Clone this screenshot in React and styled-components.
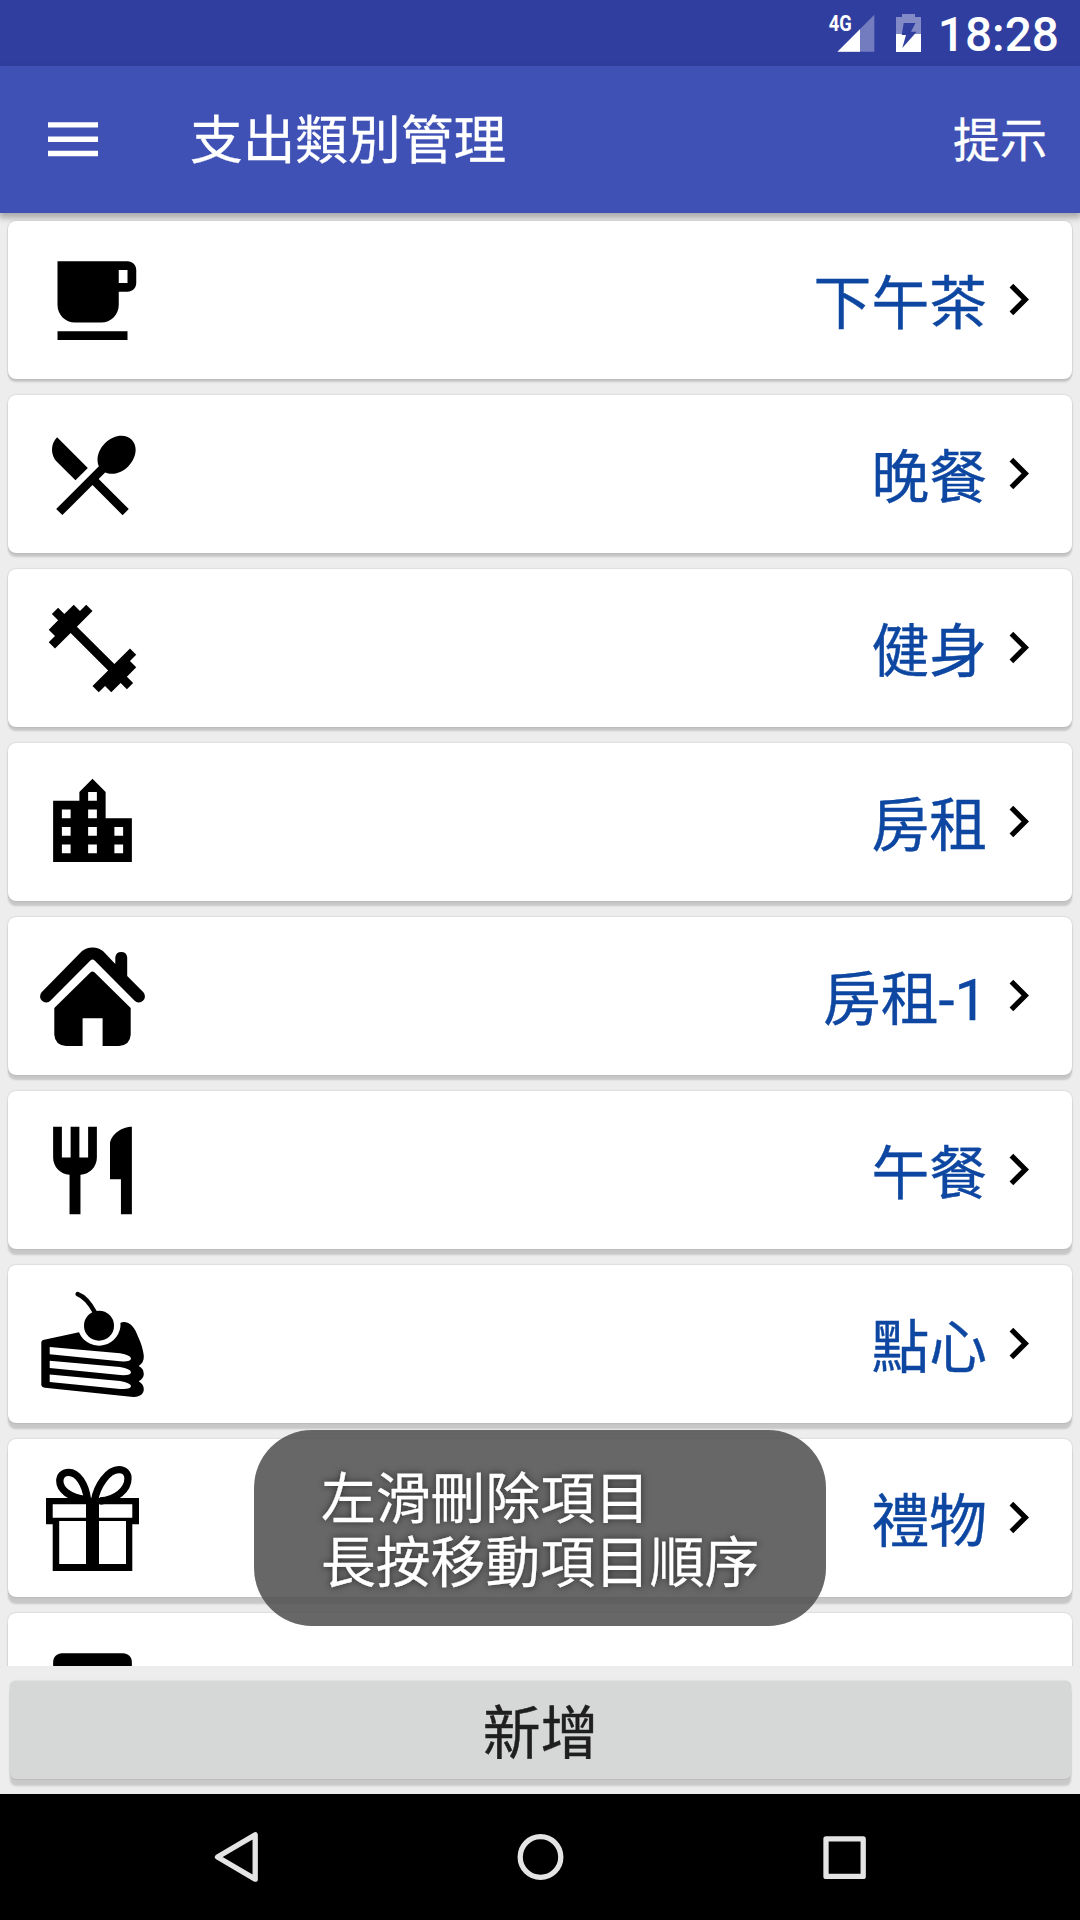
import React from "react";
import styled, { createGlobalStyle } from "styled-components";

const GlobalStyle = createGlobalStyle`
  * { box-sizing: border-box; }
  html, body { margin: 0; padding: 0; background: #000; }
  body { font-family: Roboto, "Noto Sans CJK TC", sans-serif; }
`;

const Screen = styled.div`
  position: relative;
  width: 1080px;
  height: 1920px;
  display: flex;
  flex-direction: column;
  overflow: hidden;
  background: #ededed;
`;

const StatusBar = styled.div`
  flex: none;
  height: 66px;
  display: flex;
  align-items: center;
  justify-content: flex-end;
  padding-right: 21px;
  background: #303f9f;
  color: #fff;
`;

const StatusIcons = styled.svg`
  width: 104px;
  height: 66px;
  margin-right: 9px;
`;

const Clock = styled.span`
  font-size: 47.8px;
  font-weight: 500;
  line-height: 66px;
  padding-top: 3px;
`;

const AppBar = styled.header`
  flex: none;
  height: 147px;
  display: flex;
  align-items: center;
  padding: 0 33px 0 37px;
  background: #3f51b5;
  color: #fff;
  box-shadow: 0 4px 6px 1px rgba(0, 0, 0, 0.28);
`;

const MenuIcon = styled.svg`
  width: 72px;
  height: 72px;
`;

const Title = styled.h1`
  flex: 1;
  margin: 0 0 0 81px;
  padding-top: 2px;
  font-size: 52.7px;
  font-weight: 400;
  line-height: 72px;
  -webkit-text-stroke: 0.3px currentColor;
`;

const Action = styled.span`
  padding-top: 2px;
  font-size: 47px;
  line-height: 66px;
  -webkit-text-stroke: 0.3px currentColor;
`;

const List = styled.main`
  flex: none;
  height: 1453px;
  padding: 8px 8px 0;
  display: flex;
  flex-direction: column;
  gap: 16px;
  overflow: hidden;
`;

const Card = styled.div`
  flex: none;
  height: 158px;
  display: flex;
  align-items: center;
  padding: 0 22px 0 32px;
  border-radius: 8px;
  background: #fff;
  box-shadow: 0 ${(p) => p.$depth}px 2px rgba(0, 0, 0, 0.16),
    0 0 2px rgba(0, 0, 0, 0.2);
`;

const Glyph = styled.svg`
  width: 105px;
  height: 105px;
  overflow: visible;
`;

const Label = styled.span`
  flex: 1;
  padding-top: 8px;
  text-align: right;
  font-size: 57.8px;
  line-height: 80px;
  color: #0d47a1;
  -webkit-text-stroke: 0.4px currentColor;
`;

const Chevron = styled.svg`
  width: 63px;
  height: 63px;
  margin-bottom: 1px;
`;

const Footer = styled.div`
  flex: none;
  height: 128px;
  padding: 15px 9px 15px 10px;
`;

const AddButton = styled.button`
  display: block;
  width: 100%;
  height: 98px;
  border: 0;
  padding: 8px 0 0;
  border-radius: 6px;
  background: #d6d7d7;
  color: #1f1f1f;
  font-family: inherit;
  font-size: 57.8px;
  line-height: 90px;
  -webkit-text-stroke: 0.4px currentColor;
  box-shadow: 0 7px 2px rgba(0, 0, 0, 0.15), 0 0 2px rgba(0, 0, 0, 0.2);
`;

const NavBar = styled.nav`
  flex: none;
  height: 126px;
  display: grid;
  grid-template-columns: repeat(3, 304px);
  justify-content: center;
  align-items: center;
  justify-items: center;
  background: #000;
`;

const NavIcon = styled.svg`
  width: 60px;
  height: 60px;
  fill: none;
  stroke: #e4e4e4;
  stroke-width: 5.3;
  stroke-linejoin: round;
`;

const Toast = styled.div`
  position: absolute;
  left: 254px;
  top: 1430px;
  width: 572px;
  height: 196px;
  padding: 37px 67px 31px;
  border-radius: 58px;
  background: rgba(80, 80, 80, 0.87);
  color: #fff;
  font-size: 54.8px;
  line-height: 64px;
  white-space: pre;
  -webkit-text-stroke: 0.3px currentColor;
  text-shadow: 0 0 7px rgba(0, 0, 0, 0.65);
`;

const material = (d) => (
  <Glyph viewBox="0 0 24 24">
    <path d={d} />
  </Glyph>
);

const house = (
  <Glyph viewBox="0 0.3 105 105">
    <path d="M1.6 48.6L41.8 7.6Q46 3.8 52.5 3.8T63.2 7.6L75.3 20.2V13.5A6 6 0 0 1 87.2 13.5V32.4L103.4 48.6A6 6 0 0 1 94.4 56.7L54.6 16.8Q52.5 15 50.4 16.8L10.6 56.7A6 6 0 0 1 1.6 48.6Z" />
    <path d="M50.6 28.6Q52.5 26.8 54.4 28.6L90.7 64.2V91Q90 101.5 79 102.2H62.6V74.5H42.6V102.2H26Q15 101.5 14.3 91V64.2Z" />
  </Glyph>
);

const cake = (
  <Glyph viewBox="0 0.5 105 105">
    <path d="M37.7 2.6Q47 6 55 21" fill="none" stroke="#000" strokeWidth="4.6" strokeLinecap="round" />
    <circle cx="59" cy="34.2" r="15" />
    <path
      fillRule="evenodd"
      d="M39 40.8L3 48.6Q1.3 49.2 1.3 51V93.8Q1.8 96 5 96.3L93.3 105.5C100 105.8 103.8 102 103.8 97.8Q103.8 93 98.7 89.8Q103.8 87 103.8 82.5Q103.8 77 98.7 74.5Q104.2 71 103.8 64C103 58 101 51 98.3 45.8C95 36 90 30.3 83.3 30.5L80.5 31.2A21.6 21.6 0 0 1 39 40.8Z
      M9.7 55.5V62.8L80 69.8Q91 70.5 91 67Q90.5 63.5 80 61.8Z
      M9.7 69.3V76.6L80 83.6Q91 84.3 91 80.8Q90.5 77.3 80 75.6Z
      M9.7 83.1V90.4L80 97.4Q91 98.1 91 94.6Q90.5 91.1 80 89.4Z"
    />
  </Glyph>
);

const gift = (
  <Glyph viewBox="0 0.5 105 105">
    <path
      fillRule="evenodd"
      d="M6 32.5H99V58.8H92.3V105.5H12.7V58.8H6Z M12.7 38.8V52.3H46V38.8Z M59 38.8V52.3H92.3V38.8Z M19.2 55.6V98.6H46V55.6Z M59 55.6V98.6H86V55.6Z"
    />
    <g fill="none" stroke="#000" strokeWidth="7.3">
      <path d="M47.5 34C45.5 19 38 6.8 28.7 6.8C22.5 6.8 19.8 11 19.8 15.6C19.8 24 29 32 46 34" />
      <path d="M54.5 35C57 20 68 4.1 79 4.1C84.5 4.1 88 8 88 13C88 24 76 34.5 60 35.5" />
    </g>
  </Glyph>
);

const rows = [
  {
    name: "下午茶",
    depth: 2.8,
    icon: material(
      "M20 3H4v10c0 2.21 1.79 4 4 4h6c2.21 0 4-1.79 4-4v-3h2c1.11 0 2-.89 2-2V5c0-1.11-.89-2-2-2zm0 5h-2V5h2v3zM4 19h16v2H4z"
    ),
  },
  {
    name: "晚餐",
    depth: 3.3,
    icon: material(
      "M8.1 13.34l2.83-2.83L3.91 3.5c-1.56 1.56-1.56 4.09 0 5.66l4.19 4.18zm6.78-1.81c1.53.71 3.68.21 5.27-1.38 1.91-1.91 2.28-4.65.81-6.12-1.46-1.46-4.2-1.1-6.12.81-1.59 1.59-2.09 3.74-1.38 5.27L3.7 19.87l1.41 1.41L12 14.41l6.88 6.88 1.41-1.41L13.41 13l1.47-1.47z"
    ),
  },
  {
    name: "健身",
    depth: 3.8,
    icon: material(
      "M20.57 14.86L22 13.43 20.57 12 17 15.57 8.43 7 12 3.43 10.57 2 9.14 3.43 7.71 2 5.57 4.14 4.14 2.71 2.71 4.14l1.43 1.43L2 7.71l1.43 1.43L2 10.57 3.43 12 7 8.43 15.57 17 12 20.57 13.43 22l1.43-1.43L16.29 22l2.14-2.14 1.43 1.43 1.43-1.43-1.43-1.43L22 16.29z"
    ),
  },
  {
    name: "房租",
    depth: 4.3,
    icon: material(
      "M15 11V5l-3-3-3 3v2H3v14h18V11h-6zm-8 8H5v-2h2v2zm0-4H5v-2h2v2zm0-4H5V9h2v2zm6 8h-2v-2h2v2zm0-4h-2v-2h2v2zm0-4h-2V9h2v2zm0-4h-2V5h2v2zm6 12h-2v-2h2v2zm0-4h-2v-2h2v2z"
    ),
  },
  { name: "房租-1", depth: 4.8, icon: house },
  {
    name: "午餐",
    depth: 5.3,
    icon: material(
      "M11 9H9V2H7v7H5V2H3v7c0 2.12 1.66 3.84 3.75 3.97V22h2.5v-9.03C11.34 12.84 13 11.12 13 9V2h-2v7zm5-3v8h2.5v8H21V2c-2.76 0-5 2.24-5 4z"
    ),
  },
  { name: "點心", depth: 5.8, icon: cake },
  { name: "禮物", depth: 6.2, icon: gift },
  {
    name: "",
    depth: 6.2,
    icon: material("M19 3H5c-1.1 0-2 .9-2 2v14c0 1.1.9 2 2 2h14c1.1 0 2-.9 2-2V5c0-1.1-.9-2-2-2z"),
  },
];

export default function App() {
  return (
    <Screen>
      <GlobalStyle />
      <StatusBar>
        <StatusIcons viewBox="824 0 104 66">
          <text x="827.8" y="31.3" fontFamily="Roboto, sans-serif" fontSize="22.5" fontWeight="700" fill="#fff" textLength="23" lengthAdjust="spacingAndGlyphs">
            4G
          </text>
          <path d="M836.5 51.7L873.3 14.7V51.7Z" fill="#fff" opacity="0.32" />
          <path d="M836.5 51.7L859 29.2V51.7Z" fill="#fff" />
          <path d="M895 17H901V14H914V17H920V34H895Z" fill="#fff" opacity="0.4" />
          <path d="M895 34H920V52H895Z" fill="#fff" />
          <path d="M902.7 23H914.5L910 31.7H915.7L901.3 48L905 35H900.7Z" fill="#303f9f" />
        </StatusIcons>
        <Clock>18:28</Clock>
      </StatusBar>

      <AppBar>
        <MenuIcon viewBox="0 0 72 72" fill="#fff">
          <path d="M11 18.2H61V23.6H11ZM11 32.5H61V37.9H11ZM11 46.8H61V52.2H11Z" />
        </MenuIcon>
        <Title>支出類別管理</Title>
        <Action>提示</Action>
      </AppBar>

      <List>
        {rows.map((row, i) => (
          <Card key={i} $depth={row.depth}>
            {row.icon}
            <Label>{row.name}</Label>
            <Chevron viewBox="0 0 24 24">
              <path d="M8.59 16.59L13.17 12 8.59 7.41 10 6l6 6-6 6-1.41-1.41z" />
            </Chevron>
          </Card>
        ))}
      </List>

      <Footer>
        <AddButton>新增</AddButton>
      </Footer>

      <NavBar>
        <NavIcon viewBox="206 1827 60 60">
          <path d="M217.5 1857L255.2 1834.8V1879.2Z" />
        </NavIcon>
        <NavIcon viewBox="510 1827 60 60">
          <circle cx="540.5" cy="1857" r="20.3" />
        </NavIcon>
        <NavIcon viewBox="814 1827 60 60">
          <rect x="826" y="1838.8" width="37.2" height="37.6" />
        </NavIcon>
      </NavBar>

      <Toast>{"左滑刪除項目\n長按移動項目順序"}</Toast>
    </Screen>
  );
}
